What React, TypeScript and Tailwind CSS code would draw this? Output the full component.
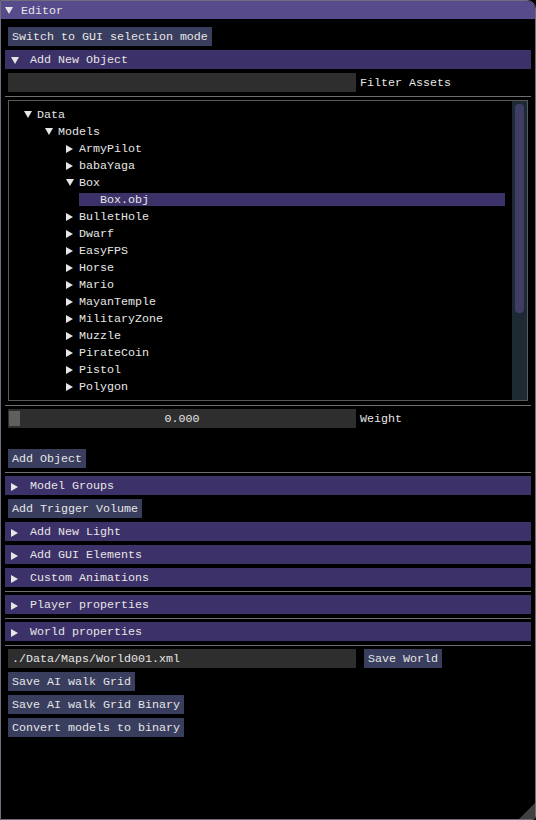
import React from "react";

const font = { fontFamily: '"Liberation Mono", "DejaVu Sans Mono", monospace' };

const DownArrow = () => (
  <svg width="8" height="7" viewBox="0 0 8 7" className="shrink-0">
    <polygon points="0,0 8,0 4,7" fill="#e6e6e6" />
  </svg>
);

const RightArrow = () => (
  <svg width="7" height="8" viewBox="0 0 7 8" className="shrink-0">
    <polygon points="0,0 7,4 0,8" fill="#e6e6e6" />
  </svg>
);

const Button = ({ label, className = "" }: { label: string; className?: string }) => (
  <div className={"h-[19px] px-[4px] pt-[2px] flex items-center bg-[#393d5e] self-start whitespace-pre " + className}>
    {label}
  </div>
);

const Header = ({ label, open = false }: { label: string; open?: boolean }) => (
  <div className="h-[19px] mx-[-3px] pt-[2px] flex items-center bg-[#3c3168] pl-[6px] whitespace-pre">
    {open ? <DownArrow /> : <RightArrow />}
    <span className={open ? "ml-[11px]" : "ml-[12px]"}>{label}</span>
  </div>
);

// separator line: 4px above, 3px below
const Separator = () => <div className="h-px mx-[-3px] mb-[-1px] bg-[#6e6e6e]" />;

const models = [
  "ArmyPilot",
  "babaYaga",
  "Box",
  "BulletHole",
  "Dwarf",
  "EasyFPS",
  "Horse",
  "Mario",
  "MayanTemple",
  "MilitaryZone",
  "Muzzle",
  "PirateCoin",
  "Pistol",
  "Polygon",
];

const TreeRow = ({ indent, label, open, leaf, selected }: { indent: number; label: string; open?: boolean; leaf?: boolean; selected?: boolean }) => (
  <div className="h-[13px] flex items-center whitespace-pre" style={{ paddingLeft: indent }}>
    {leaf ? (
      <div className={"flex-1 h-[13px] pt-[2px] flex items-center pl-[21px] " + (selected ? "bg-[#3c3168]" : "")}>{label}</div>
    ) : (
      <>
        <div className="w-[13px] flex justify-start">{open ? <DownArrow /> : <RightArrow />}</div>
        <span className="mt-[2px]">{label}</span>
      </>
    )}
  </div>
);

export default function App() {
  return (
    <div className="w-[536px] h-[820px] bg-black text-[#e6e6e6] text-[11.67px] leading-[13px]" style={font}>
      <div className="relative h-full flex flex-col border border-[#6e6e7e] rounded-tr-[9px] rounded-br-[4px] overflow-hidden">
        <div className="h-[18px] shrink-0 bg-[#574b8c] flex items-center pl-[4px]">
          <DownArrow />
          <span className="ml-[8px] mt-[2px]">Editor</span>
        </div>

        <div className="flex flex-col gap-[4px] pl-[7px] pr-[7px] pt-[8px]">
          <Button label="Switch to GUI selection mode" />
          <Header label="Add New Object" open />
          <div className="flex items-center gap-[4px]">
            <div className="w-[348px] h-[19px] bg-[#2e2e2e]" />
            <span className="mt-[2px]">Filter Assets</span>
          </div>
          <Separator />
          <div className="w-[520px] h-[301px] border border-[#5a5a5a] flex">
            <div className="flex-1 flex flex-col gap-[4px] pt-[7px] pl-[15px] pr-[7px]">
              <TreeRow indent={0} label="Data" open />
              <TreeRow indent={21} label="Models" open />
              {models.map((m) =>
                m === "Box" ? (
                  <React.Fragment key={m}>
                    <TreeRow indent={42} label="Box" open />
                    <TreeRow indent={55} label="Box.obj" leaf selected />
                  </React.Fragment>
                ) : (
                  <TreeRow key={m} indent={42} label={m} />
                )
              )}
            </div>
            <div className="w-[15px] h-full bg-[#1d2933] py-[3px] px-[3px]">
              <div className="w-[9px] h-[209px] rounded-[4px] bg-[#3e3d66]" />
            </div>
          </div>
          <Separator />
          <div className="flex items-center gap-[4px]">
            <div className="relative w-[348px] h-[19px] pt-[2px] bg-[#2e2e2e] flex items-center justify-center">
              <div className="absolute left-[1px] top-[2px] w-[11px] h-[15px] bg-[#5f5f5f]" />
              <span>0.000</span>
            </div>
            <span className="mt-[2px]">Weight</span>
          </div>
          <div className="h-[13px]" />
          <Button label="Add Object" />
          <Separator />
          <Header label="Model Groups" />
          <Button label="Add Trigger Volume" />
          <Header label="Add New Light" />
          <Header label="Add GUI Elements" />
          <Header label="Custom Animations" />
          <Separator />
          <Header label="Player properties" />
          <Separator />
          <Header label="World properties" />
          <Separator />
          <div className="flex items-center">
            <div className="w-[348px] h-[19px] pt-[2px] bg-[#2e2e2e] flex items-center px-[4px] whitespace-pre">./Data/Maps/World001.xml</div>
            <Button label="Save World" className="ml-[8px]" />
          </div>
          <Button label="Save AI walk Grid" />
          <Button label="Save AI walk Grid Binary" />
          <Button label="Convert models to binary" />
        </div>

        <svg width="16" height="16" viewBox="0 0 16 16" className="absolute right-0 bottom-0">
          <polygon points="16,0 16,16 0,16" fill="#404040" />
        </svg>
      </div>
    </div>
  );
}
